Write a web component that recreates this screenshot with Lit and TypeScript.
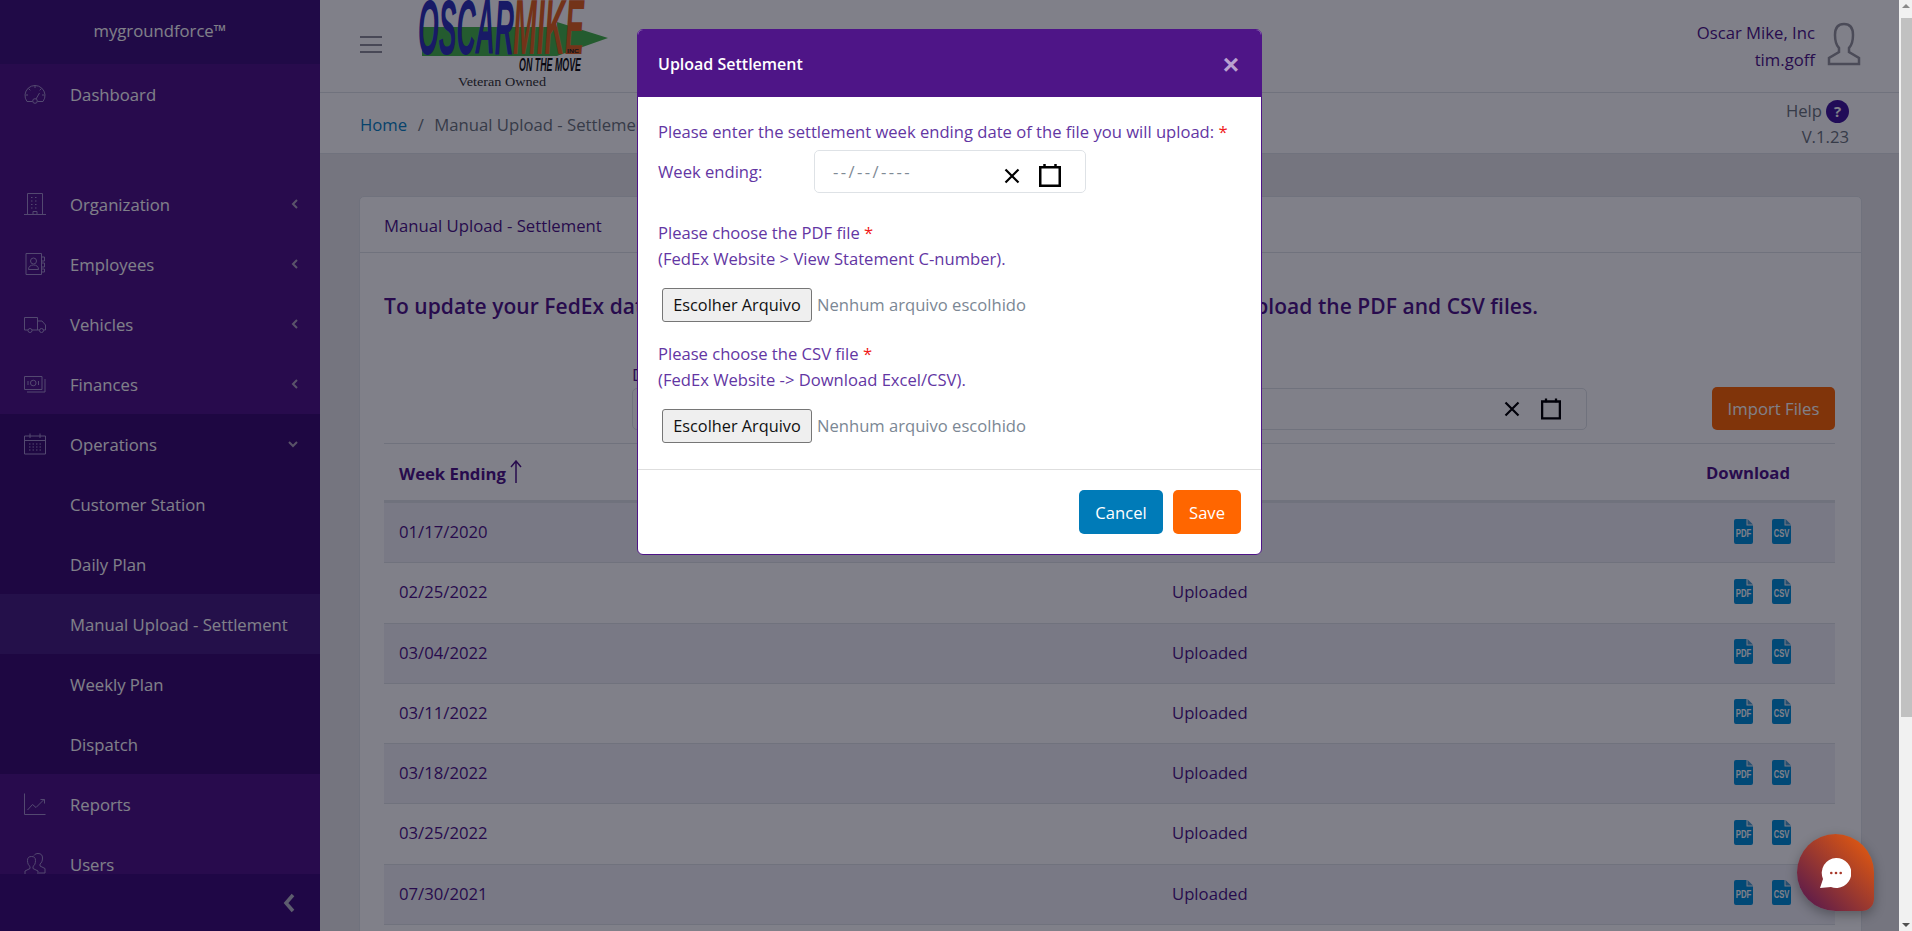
import { LitElement, css, html, svg } from "lit";
import { customElement } from "lit/decorators.js";

const line = (content: unknown) => html`<svg class="nav-icon" viewBox="0 0 22 22" fill="none" stroke="currentColor" stroke-width="1">${content}</svg>`;

const icons: Record<string, unknown> = {
  gauge: line(svg`<path d="M3 18.500A10 10 0 1 1 19 18.500H13.500M8.500 18.500H3"/><circle cx="11" cy="18" r="2.300"/><path d="M12 16l3.500-6M11 2.500v2.500M4.500 5.500l1.800 1.800M17.500 5.500l-1.800 1.800M1.500 12h2.500M18 12h2.500"/>`),
  building: line(svg`<path d="M0 21.500h22M3.500 21.500V.500h15v21"/><path stroke-dasharray="1.500 2.500" d="M7 4.500h8M7 8h8M7 11.500h8M7 15h8"/><path d="M9 21.500v-3h4v3"/>`),
  contacts: line(svg`<path d="M2 .500h15.500v21H2zM17.500 4h3v4h-3M17.500 10h3v4h-3M17.500 16h3v3h-3"/><circle cx="9.500" cy="8" r="3"/><path d="M4.500 16.500c0-3 2-4.500 5-4.500s5 1.500 5 4.500z"/>`),
  truck: line(svg`<path d="M4 17H.500V4.500h13V17H8M13.500 8h4.500l3.500 4v5h-2M13.500 17h2"/><circle cx="6" cy="17.500" r="2"/><circle cx="17.500" cy="17.500" r="2"/>`),
  money: line(svg`<path d="M.500 3.500h17.500v13H.500zM3 19h18V6"/><circle cx="9.250" cy="10" r="2.800"/><path d="M4 8v4M14.500 8v4"/>`),
  calendar: line(svg`<path d="M.500 3h21v18h-21zM.500 7.500h21M6 .500V5M16 .500V5"/><path stroke-dasharray="1.500 2" d="M5 11h13M5 14h13M5 17h13"/>`),
  chart: line(svg`<path d="M.500 .500v21h21M3.500 17l5-5.500 3.500 3 8-8M16.500 6.500h4v4"/>`),
  users: line(svg`<path d="M1 21.500v-3.500l5-2.500v-2c-1.500-1-2.500-3-2.500-6C3.500 4.500 5 3.500 7.500 3.500S11.500 4.500 11.500 7.500c0 3-1 5-2.500 6v2l5 2.500v3.500z"/><path d="M10 2.500C11 1 12.500.500 14 .500c3 0 4.500 1.500 4.500 4.500s-1 5-2.500 6v2l5 2.500v4.500h-6"/>`),
};

const topItems = [{ label: "Dashboard", icon: "gauge" }];
const midItems = [
  { label: "Organization", icon: "building" },
  { label: "Employees", icon: "contacts" },
  { label: "Vehicles", icon: "truck" },
  { label: "Finances", icon: "money" },
];
const subItems = ["Customer Station", "Daily Plan", "Manual Upload - Settlement", "Weekly Plan", "Dispatch"];
const endItems = [
  { label: "Reports", icon: "chart" },
  { label: "Users", icon: "users" },
];
const rows = ["01/17/2020", "02/25/2022", "03/04/2022", "03/11/2022", "03/18/2022", "03/25/2022", "07/30/2021", "08/06/2021"];

const chevronLeft = html`<svg class="chev" viewBox="0 0 8 12" fill="none" stroke="currentColor" stroke-width="2"><path d="M6 2L2 6l4 4"/></svg>`;
const chevronDown = html`<svg class="chev down" viewBox="0 0 12 8" fill="none" stroke="currentColor" stroke-width="2"><path d="M2 2l4 4 4-4"/></svg>`;
const clearIcon = html`<svg class="clear" viewBox="0 0 16 16" fill="none" stroke="#000" stroke-width="2.200"><path d="M1.500 1.500l13 13M14.500 1.500l-13 13"/></svg>`;
const calIcon = html`<svg class="cal" viewBox="0 0 22 23" fill="none" stroke="#000"><path stroke-width="2.500" d="M1.250 3.250h19.500v18.500H1.250z"/><path stroke-width="2.500" d="M5.500 0v4M16.500 0v4"/></svg>`;

const fileIcon = (kind: string) => html`<svg class="file" viewBox="0 0 19 25">
  <path fill="#0090d8" d="M2 0h10.500v6.500H19V23a2 2 0 0 1-2 2H2a2 2 0 0 1-2-2V2a2 2 0 0 1 2-2z" />
  <path fill="#4f9fd0" d="M13.500 0L19 5.500h-5.500z" />
  <text x="9.500" y="18" text-anchor="middle" font-size="10" font-weight="700" fill="#fff" font-family="Liberation Sans, sans-serif" textLength="15.500" lengthAdjust="spacingAndGlyphs">${kind}</text>
</svg>`;

@customElement("app-root")
export class AppRoot extends LitElement {
  static styles = css`
    :host {
      display: flex;
      width: 1912px;
      height: 931px;
      overflow: hidden;
      font-family: "Open Sans", sans-serif;
      font-size: 16.7px;
      color: #4e1587;
    }

    .page {
      position: relative;
      flex: 0 0 1899px;
      display: flex;
      height: 931px;
      overflow: hidden;
      background: #e9e9ea;
    }

    /* sidebar */
    .sidebar {
      flex: 0 0 320px;
      display: flex;
      flex-direction: column;
      height: 931px;
      background: #4e1587;
      color: #fff;
    }

    .brand {
      flex: 0 0 64px;
      box-sizing: border-box;
      padding-bottom: 3px;
      display: flex;
      align-items: center;
      justify-content: center;
      background: #3f137a;
    }

    .nav {
      flex: 1;
      overflow: hidden;
    }

    .item {
      display: flex;
      align-items: center;
      height: 60px;
      padding-left: 24px;
      padding-right: 21px;
    }

    .nav-icon {
      flex: 0 0 22px;
      width: 22px;
      height: 22px;
      margin-right: 24px;
      color: #a590cc;
    }

    .item span {
      flex: 1;
    }

    .chev {
      width: 8px;
      height: 12px;
      color: #d5d5d5;
      opacity: 0.75;
    }

    .chev.down {
      width: 12px;
      height: 8px;
    }

    .gap {
      height: 50px;
    }

    .group {
      background: #3b0d70;
    }

    .sub {
      padding-left: 70px;
    }

    .sub.active {
      background: #471f80;
    }

    .sidebar-foot {
      flex: 0 0 57px;
      display: flex;
      align-items: center;
      justify-content: flex-end;
      padding-right: 24px;
      background: #3d0d78;
    }

    .sidebar-foot svg {
      width: 14px;
      height: 22px;
      color: #b8b8c8;
    }

    /* main column */
    .main {
      flex: 1;
      min-width: 0;
    }

    .topbar {
      display: flex;
      height: 92px;
      padding-left: 40px;
      padding-right: 38px;
      background: #fff;
      border-bottom: 1px solid #dee2e6;
    }

    .burger {
      width: 22px;
      height: 17px;
      margin-top: 36px;
      margin-right: 35px;
      border-top: 2px solid #8f8f98;
      border-bottom: 2px solid #8f8f98;
      position: relative;
      box-sizing: border-box;
    }

    .burger::after {
      content: "";
      position: absolute;
      left: 0;
      right: 0;
      top: 5.5px;
      height: 2px;
      background: #8f8f98;
    }

    .logo {
      width: 192px;
      height: 92px;
    }

    .user {
      margin-left: auto;
      display: flex;
      align-items: flex-start;
      padding-top: 19px;
      text-align: right;
      line-height: 27px;
    }

    .user svg {
      width: 34px;
      height: 44px;
      margin-left: 12px;
      margin-top: 3px;
    }

    .crumbs {
      display: flex;
      align-items: center;
      height: 60px;
      padding-left: 40px;
      padding-right: 50px;
      background: #fff;
      border-bottom: 1px solid #dee2e6;
      color: #6c757d;
    }

    .crumbs > a,
    .crumbs > span {
      padding-top: 2px;
    }

    .crumbs a {
      color: #0a84c4;
    }

    .crumbs .sep {
      margin: 0 10.5px;
    }

    .help {
      margin-left: auto;
      padding-top: 2px;
      text-align: right;
      line-height: 26px;
    }

    .help-line {
      display: flex;
      align-items: center;
      gap: 4px;
    }

    .help-dot {
      display: flex;
      align-items: center;
      justify-content: center;
      width: 23px;
      height: 23px;
      border-radius: 50%;
      background: #41179c;
      color: #fff;
      font-size: 15px;
      font-weight: 700;
    }

    .card {
      margin: 42px 37px 0 39px;
      background: #fff;
      border: 1px solid #dee2e6;
      border-radius: 5px 5px 0 0;
    }

    .card-head {
      height: 56px;
      box-sizing: border-box;
      padding: 1px 24px 0;
      display: flex;
      align-items: center;
      border-bottom: 1px solid #dee2e6;
    }

    .card-body {
      padding: 0 26px 0 24px;
    }

    h2 {
      margin: 39px 0 0;
      font-size: 21px;
      line-height: 28px;
      font-weight: 600;
      letter-spacing: 0.05px;
      white-space: nowrap;
    }

    .controls {
      display: flex;
      justify-content: space-between;
      align-items: flex-end;
      margin-top: 45px;
      padding-left: 248px;
      margin-bottom: 13px;
    }

    .controls label {
      display: block;
      line-height: 20px;
      margin-bottom: 3px;
    }

    .date-wide {
      display: flex;
      align-items: center;
      justify-content: flex-end;
      gap: 21px;
      width: 955px;
      height: 42px;
      box-sizing: border-box;
      padding-right: 25px;
      border: 1px solid #dee2e6;
      border-radius: 5px;
    }

    .clear {
      width: 16px;
      height: 16px;
    }

    .cal {
      width: 20px;
      height: 22px;
    }

    .import {
      width: 123px;
      height: 43px;
      border: 0;
      border-radius: 5px;
      background: #ff6600;
      color: #fff;
      font: inherit;
    }

    table {
      width: 100%;
      border-collapse: collapse;
      table-layout: fixed;
      border-top: 1px solid #dee2e6;
    }

    th {
      height: 56px;
      padding: 0 15px;
      text-align: left;
      font-weight: 700;
      border-bottom: 3px solid #dee2e6;
    }

    .sort {
      width: 12px;
      height: 23px;
      margin-left: 4px;
      vertical-align: -3px;
    }

    td {
      height: 57.25px;
      padding: 0 15px 2px;
      border-bottom: 1px solid #dee2e6;
    }

    tbody tr:nth-child(odd) {
      background: #f1f1f6;
    }

    .col-date {
      width: 773px;
    }

    .col-actions {
      width: 171px;
    }

    th.download {
      padding-left: 42px;
      padding-right: 0;
    }

    .files {
      display: flex;
      gap: 19px;
      padding-left: 70px;
    }

    td.actions {
      height: 56.25px;
      padding: 0 0 3px;
    }

    .file {
      display: block;
      width: 19px;
      height: 25px;
    }

    /* modal layer */
    .backdrop {
      position: absolute;
      inset: 0;
      background: rgba(1, 1, 20, 0.5);
    }

    .modal {
      position: absolute;
      left: 637px;
      top: 29px;
      width: 625px;
      height: 526px;
      box-sizing: border-box;
      display: flex;
      flex-direction: column;
      background: #fff;
      border: 1px solid #4e1587;
      border-radius: 6px;
      overflow: hidden;
      font-size: 16.6px;
      color: #6336a3;
    }

    .modal-head {
      flex: 0 0 67px;
      display: flex;
      align-items: center;
      justify-content: space-between;
      padding: 0 22px 0 20px;
      background: #4e1587;
      color: #fff;
      font-size: 16px;
      font-weight: 600;
    }

    .close {
      padding-top: 3px;
      color: #b9a1d0;
      font-size: 28px;
      font-weight: 700;
      line-height: 1;
      font-family: "Liberation Sans", sans-serif;
    }

    .modal-body {
      flex: 1;
      padding: 22px 20px 0;
      line-height: 26px;
      white-space: nowrap;
    }

    .req {
      color: #f01818;
    }

    .week {
      display: flex;
      align-items: center;
      margin-top: 5px;
      margin-bottom: 27px;
    }

    .week > span {
      width: 156px;
    }

    .date-input {
      display: flex;
      align-items: center;
      width: 272px;
      height: 43px;
      box-sizing: border-box;
      padding-left: 18px;
      border: 1px solid #dee2e6;
      border-radius: 5px;
      color: #7f8a95;
    }

    .date-input .mask {
      flex: 1;
      letter-spacing: 2.4px;
    }

    .date-input .clear {
      margin-top: 8px;
      margin-right: 19px;
    }

    .date-input .cal {
      width: 22px;
      height: 23px;
      margin-top: 7px;
      margin-right: 24px;
    }

    .file-row {
      display: flex;
      align-items: center;
      margin: 16px 0 19px 4px;
      color: #7b8794;
    }

    .file-row.last {
      margin: 16px 0 26px 4px;
    }

    .file-btn {
      width: 150px;
      height: 34px;
      box-sizing: border-box;
      margin-right: 5px;
      padding: 0;
      border: 1px solid #767676;
      border-radius: 3px;
      background: #efefef;
      color: #111;
      font: inherit;
      font-size: 16.3px;
    }

    .modal-foot {
      flex: 0 0 85px;
      box-sizing: border-box;
      display: flex;
      justify-content: flex-end;
      gap: 10px;
      padding: 20px 20px 0 0;
      border-top: 1px solid #dedede;
    }

    .modal-foot button {
      height: 44px;
      border: 0;
      border-radius: 5px;
      color: #fff;
      font: inherit;
    }

    .cancel {
      width: 84px;
      background: #007bb8;
    }

    .save {
      width: 68px;
      background: #ff6600;
    }

    .chat {
      position: absolute;
      left: 1797px;
      top: 834px;
      width: 77px;
      height: 77px;
      display: flex;
      align-items: center;
      justify-content: center;
      border-radius: 50% 50% 12px 50%;
      background: linear-gradient(45deg, #4c1452, #ee5f0a);
      box-shadow: 0 4px 12px rgba(0, 0, 0, 0.3);
    }

    .chat svg {
      width: 32px;
      height: 32px;
      margin-right: 2px;
    }

    /* browser scrollbar */
    .scrollbar {
      position: relative;
      flex: 0 0 13px;
      background: #f1f1f1;
    }

    .thumb {
      position: absolute;
      left: 2px;
      right: 0;
      top: 18px;
      height: 699px;
      background: #c1c1c1;
    }

    .arrow-up,
    .arrow-down {
      position: absolute;
      left: 3px;
      width: 0;
      height: 0;
      border-left: 4px solid transparent;
      border-right: 4px solid transparent;
    }

    .arrow-up {
      top: 4px;
      border-bottom: 4px solid #8a8a8a;
    }

    .arrow-down {
      bottom: 4px;
      border-top: 4px solid #505050;
    }
  `;

  private renderLogo() {
    return html`<svg class="logo" viewBox="0 0 192 92">
      <path fill="#46b54a" d="M5 27h135v-5l51 16-51 18H5z" />
      <text x="1" y="54" font-family="Liberation Sans, sans-serif" font-size="78" font-weight="700" font-style="italic" fill="#2f33b8" textLength="96" lengthAdjust="spacingAndGlyphs">OSCAR</text>
      <text x="96" y="54" font-family="Liberation Sans, sans-serif" font-size="78" font-weight="700" font-style="italic" fill="#e4651f" textLength="71" lengthAdjust="spacingAndGlyphs">MIKE</text>
      <text x="150" y="53" font-family="Liberation Sans, sans-serif" font-size="6" font-weight="700" fill="#222" textLength="12" lengthAdjust="spacingAndGlyphs">INC</text>
      <text x="102" y="71" font-family="Liberation Sans, sans-serif" font-size="19" font-weight="700" font-style="italic" fill="#111" textLength="62" lengthAdjust="spacingAndGlyphs">ON THE MOVE</text>
      <text x="41" y="86" font-family="Liberation Serif, serif" font-size="13.500" fill="#333" textLength="88" lengthAdjust="spacingAndGlyphs">Veteran Owned</text>
    </svg>`;
  }

  protected render() {
    return html`
      <div class="page">
        <aside class="sidebar">
          <div class="brand">mygroundforce™</div>
          <nav class="nav">
            ${topItems.map((i) => html`<div class="item">${icons[i.icon]}<span>${i.label}</span></div>`)}
            <div class="gap"></div>
            ${midItems.map((i) => html`<div class="item">${icons[i.icon]}<span>${i.label}</span>${chevronLeft}</div>`)}
            <div class="group">
              <div class="item">${icons.calendar}<span>Operations</span>${chevronDown}</div>
              ${subItems.map(
                (s) => html`<div class="item sub ${s.startsWith("Manual") ? "active" : ""}"><span>${s}</span></div>`
              )}
            </div>
            ${endItems.map((i) => html`<div class="item">${icons[i.icon]}<span>${i.label}</span></div>`)}
          </nav>
          <div class="sidebar-foot">
            <svg viewBox="0 0 14 22" fill="none" stroke="currentColor" stroke-width="3.500"><path d="M11 3l-7 8 7 8" /></svg>
          </div>
        </aside>

        <main class="main">
          <header class="topbar">
            <div class="burger"></div>
            ${this.renderLogo()}
            <div class="user">
              <div>Oscar Mike, Inc<br />tim.goff</div>
              <svg viewBox="0 0 34 44" fill="none" stroke="#94949c" stroke-width="2.500">
                <path d="M2 42v-6l10-6v-4c-3-3-4-7-4-13C8 5 11 2 17 2s9 3 9 11c0 6-1 10-4 13v4l10 6v6z" />
              </svg>
            </div>
          </header>
          <div class="crumbs">
            <a>Home</a><span class="sep">/</span><span>Manual Upload - Settlement</span>
            <div class="help">
              <div class="help-line">Help <span class="help-dot">?</span></div>
              <div>V.1.23</div>
            </div>
          </div>

          <section class="card">
            <div class="card-head">Manual Upload - Settlement</div>
            <div class="card-body">
              <h2>To update your FedEx data, please select the settlement week ending date and then upload the PDF and CSV files.</h2>
              <div class="controls">
                <div>
                  <label>Date</label>
                  <div class="date-wide">${clearIcon}${calIcon}</div>
                </div>
                <button class="import">Import Files</button>
              </div>
              <table>
                <colgroup>
                  <col class="col-date" /><col /><col class="col-actions" />
                </colgroup>
                <thead>
                  <tr>
                    <th>
                      Week Ending<svg class="sort" viewBox="0 0 12 23" fill="none" stroke="currentColor" stroke-width="1.500"><path d="M6 23V1M1 7l5-6 5 6" /></svg>
                    </th>
                    <th>Status</th>
                    <th class="download">Download</th>
                  </tr>
                </thead>
                <tbody>
                  ${rows.map(
                    (d) => html`<tr>
                      <td>${d}</td>
                      <td>Uploaded</td>
                      <td class="actions"><div class="files">${fileIcon("PDF")}${fileIcon("CSV")}</div></td>
                    </tr>`
                  )}
                </tbody>
              </table>
            </div>
          </section>
        </main>

        <div class="backdrop"></div>

        <div class="modal">
          <div class="modal-head"><span>Upload Settlement</span><span class="close">×</span></div>
          <div class="modal-body">
            <div>Please enter the settlement week ending date of the file you will upload: <span class="req">*</span></div>
            <div class="week">
              <span>Week ending:</span>
              <div class="date-input"><span class="mask">--/--/----</span>${clearIcon}${calIcon}</div>
            </div>
            <div>Please choose the PDF file <span class="req">*</span></div>
            <div>(FedEx Website &gt; View Statement C-number).</div>
            <div class="file-row"><button class="file-btn">Escolher Arquivo</button>Nenhum arquivo escolhido</div>
            <div>Please choose the CSV file <span class="req">*</span></div>
            <div>(FedEx Website -&gt; Download Excel/CSV).</div>
            <div class="file-row last"><button class="file-btn">Escolher Arquivo</button>Nenhum arquivo escolhido</div>
          </div>
          <div class="modal-foot">
            <button class="cancel">Cancel</button>
            <button class="save">Save</button>
          </div>
        </div>

        <div class="chat">
          <svg viewBox="0 0 32 32">
            <path fill="#fff" d="M17 1a15 15 0 1 1-5 29L1 31l3-9A15 15 0 0 1 17 1z" />
            <circle cx="12.300" cy="16" r="1.300" fill="#a8382a" />
            <circle cx="17" cy="16" r="1.300" fill="#a8382a" />
            <circle cx="21.700" cy="16" r="1.300" fill="#a8382a" />
          </svg>
        </div>
      </div>
      <div class="scrollbar">
        <div class="arrow-up"></div>
        <div class="thumb"></div>
        <div class="arrow-down"></div>
      </div>
    `;
  }
}
